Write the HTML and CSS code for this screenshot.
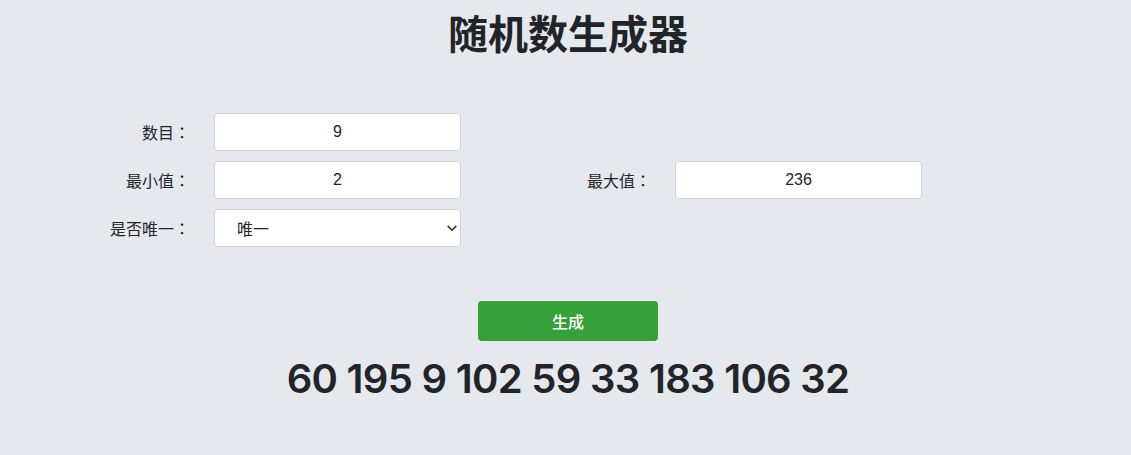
FILE: index.html
```html
<!DOCTYPE html>
<html lang="zh">
<head>
<meta charset="utf-8">
<title>随机数生成器</title>
<link rel="stylesheet" href="styles.css">
</head>
<body>
<main class="page">
  <h1 class="title">随机数生成器</h1>
  <form class="form">
    <div class="row">
      <div class="field">
        <label class="label" for="count">数目<span class="colon" lang="zh-Hant-TW">：</span></label>
        <input class="control" id="count" type="text" value="9">
      </div>
    </div>
    <div class="row">
      <div class="field">
        <label class="label" for="min">最小值<span class="colon" lang="zh-Hant-TW">：</span></label>
        <input class="control" id="min" type="text" value="2">
      </div>
      <div class="field">
        <label class="label" for="max">最大值<span class="colon" lang="zh-Hant-TW">：</span></label>
        <input class="control" id="max" type="text" value="236">
      </div>
    </div>
    <div class="row">
      <div class="field">
        <label class="label" for="unique">是否唯一<span class="colon" lang="zh-Hant-TW">：</span></label>
        <div class="select-wrap">
          <select class="control select" id="unique">
            <option>唯一</option>
            <option>不唯一</option>
          </select>
          <svg class="chevron" width="10" height="7" viewBox="0 0 10 7" aria-hidden="true"><path d="M1.2 1.4 L5 5.2 L8.8 1.4" fill="none" stroke="#333" stroke-width="1.6" stroke-linecap="round" stroke-linejoin="round"/></svg>
        </div>
      </div>
    </div>
  </form>
  <div class="actions">
    <button class="btn" type="button">生成</button>
  </div>
  <div class="result">60 195 9 102 59 33 183 106 32</div>
</main>
</body>
</html>
```
FILE: styles.css
```css
html, body {
  margin: 0;
  padding: 0;
  background: #e5e8ed;
}
body {
  font-family: "Noto Sans CJK SC", sans-serif;
  color: #212529;
  font-size: 16px;
}
.page {
  padding-top: 8px;
}
.title,
.actions,
.result {
  padding-left: 5px;
}
.title {
  margin: 0;
  text-align: center;
  font-size: 40px;
  font-weight: 700;
  line-height: 48px;
}
.form {
  margin-top: 57px;
  display: flex;
  flex-direction: column;
  gap: 10px;
}
.row {
  display: flex;
}
.field {
  display: flex;
  align-items: center;
  gap: 24px;
  width: 461px;
}
.label {
  width: 190px;
  text-align: right;
  font-size: 16px;
  line-height: 24px;
  flex: none;
}
.colon {
  font-family: "Noto Sans CJK TC", "Noto Sans CJK SC", sans-serif;
}
.control {
  box-sizing: border-box;
  width: 247px;
  height: 38px;
  border: 1px solid #ced4da;
  border-radius: 4px;
  background: #fff;
  padding: 6px 12px;
  font-family: "Liberation Sans", "Noto Sans CJK SC", sans-serif;
  font-size: 16px;
  color: #212529;
  text-align: center;
  outline: none;
}
.select-wrap {
  position: relative;
  width: 247px;
  height: 38px;
}
.select {
  -webkit-appearance: none;
  appearance: none;
  text-align: left;
  padding-left: 22px;
  font-family: "Noto Sans CJK SC", sans-serif;
}
.chevron {
  position: absolute;
  right: 4px;
  top: 16px;
  pointer-events: none;
}
.actions {
  margin-top: 54px;
  display: flex;
  justify-content: center;
}
.btn {
  width: 180px;
  height: 40px;
  border: none;
  border-radius: 4px;
  background: #36a13a;
  color: #fff;
  font-family: "Noto Sans CJK SC", sans-serif;
  font-size: 16px;
  font-weight: 500;
  cursor: pointer;
}
.result {
  margin-top: 14px;
  text-align: center;
  font-family: "Inter", "Liberation Sans", sans-serif;
  font-size: 40px;
  font-weight: 600;
  line-height: 48px;
  letter-spacing: -0.7px;
}
```
